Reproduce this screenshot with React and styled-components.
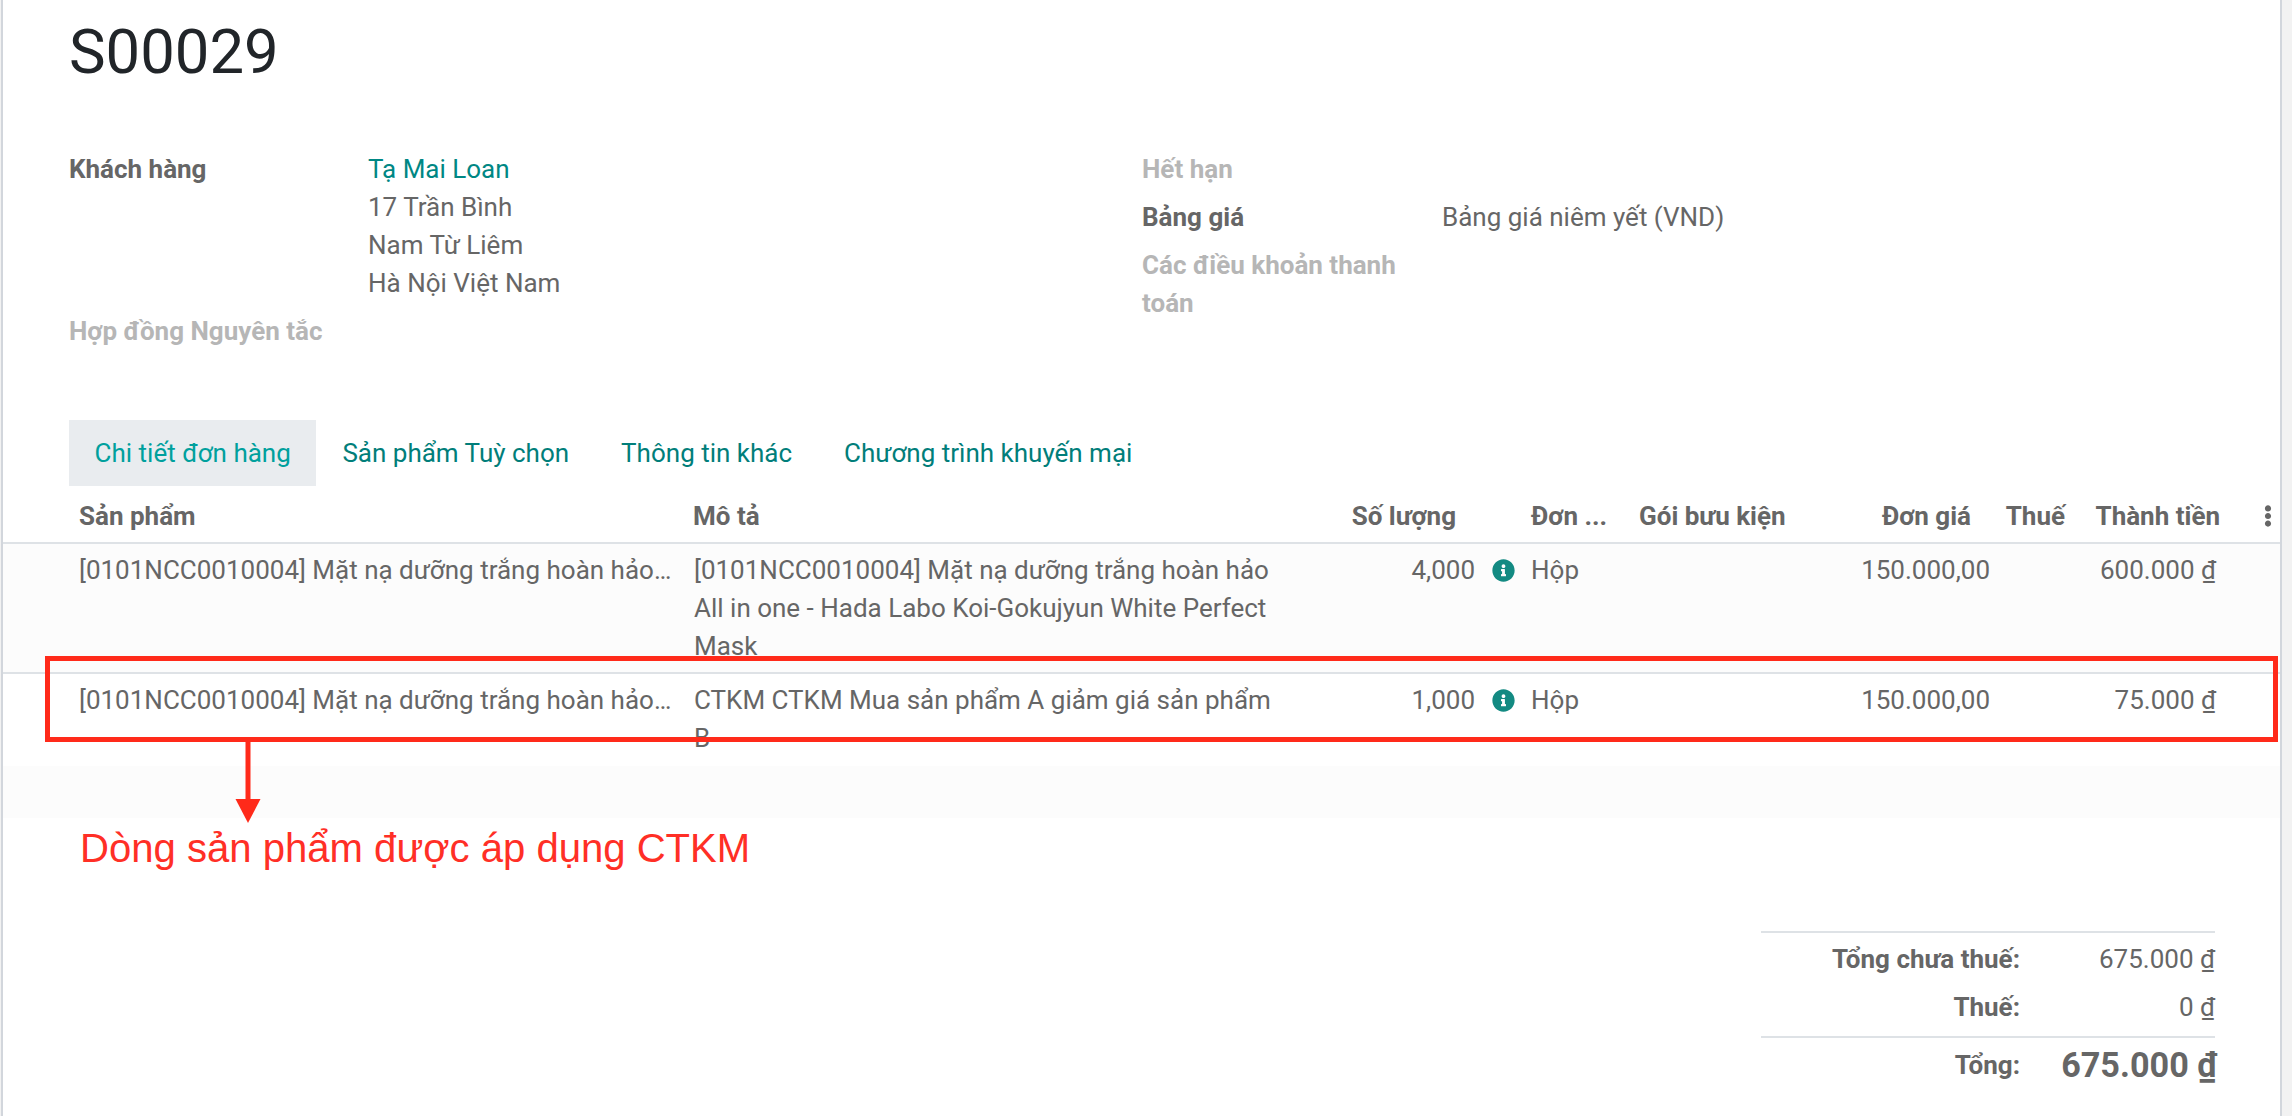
import React from 'react';
import styled, { createGlobalStyle } from 'styled-components';
import { FaInfoCircle, FaEllipsisV } from 'react-icons/fa';

const Global = createGlobalStyle`
  html, body { margin: 0; padding: 0; background: #fff; }
  body { font-family: Roboto, "Noto Sans", sans-serif; font-size: 26px; line-height: 38px; color: #666; overflow: hidden; }
`;

const Page = styled.div`
  position: relative;
  width: 2292px;
  height: 1116px;
  overflow: hidden;
  background: #f2f2f2;
  padding-left: 1px;
  box-sizing: border-box;
`;

const Sheet = styled.main`
  width: 2281px;
  height: 1116px;
  padding-top: 16px;
  box-sizing: border-box;
  background: #fff;
  border-left: 2px solid #d2d6dc;
  border-right: 2px solid #d2d6dc;
`;

const Title = styled.h1`
  margin: 0 0 62px 66px;
  font-size: 61.6px;
  line-height: 72px;
  font-weight: 400;
  color: #212529;
`;

const Groups = styled.div`
  display: grid;
  grid-template-columns: 1073px 1fr;
  margin-left: 66px;
`;

const Group = styled.div`
  display: flex;
  flex-direction: column;
  gap: 10px;
`;

const Field = styled.div`
  display: grid;
  grid-template-columns: ${p => p.$label || 300}px 1fr;
`;

const Label = styled.div`
  font-weight: 700;
  color: ${p => (p.$muted ? '#b6b6b6' : '#666')};
  padding-right: 38px;
`;

const Value = styled.div`
  white-space: pre-line;
`;

const Link = styled.span`
  color: #008784;
`;

const Tabs = styled.nav`
  display: flex;
  margin: 70px 0 0 66px;
  height: 66px;
`;

const Tab = styled.div`
  display: flex;
  align-items: center;
  padding: 0 ${p => (p.$active ? 25.6 : 26)}px 0;
  color: ${p => (p.$active ? '#00a09d' : '#017e7a')};
  background: ${p => (p.$active ? '#e9ecef' : 'transparent')};
`;

const Table = styled.table`
  width: 100%;
  table-layout: fixed;
  border-collapse: collapse;
`;

const Th = styled.th`
  height: 53px;
  padding: 3px ${p => p.$pr || 0}px 0 ${p => p.$pl || 0}px;
  text-align: ${p => p.$align || 'left'};
  font-weight: 700;
  color: #666;
  white-space: nowrap;
  overflow: hidden;
  border-bottom: 2px solid #dee2e6;
`;

const Tr = styled.tr`
  background: ${p => (p.$stripe ? '#fcfcfc' : '#fff')};
  border-bottom: ${p => (p.$line ? '2px solid #dee2e6' : '0')};
`;

const Td = styled.td`
  padding: 7px ${p => p.$pr || 0}px ${p => (p.$line ? 7 : 9)}px ${p => p.$pl || 0}px;
  text-align: ${p => p.$align || 'left'};
  vertical-align: top;
  overflow: hidden;
`;

const Ellipsis = styled.div`
  white-space: nowrap;
  overflow: hidden;
  text-overflow: ellipsis;
`;

const Qty = styled.div`
  display: flex;
  justify-content: flex-end;
  align-items: center;
  gap: 17px;
  color: #666;
`;

const Info = styled(FaInfoCircle)`
  display: block;
  color: #138a82;
  font-size: 23px;
`;

const Dots = styled(FaEllipsisV)`
  display: block;
  margin-left: 26px;
  font-size: 22px;
  color: #666;
`;

const EmptyRow = styled.tr`
  height: 52px;
  background: #fcfcfc;
`;

const Totals = styled.section`
  width: 454px;
  margin: 113px 65px 0 auto;
  border-top: 2px solid #dee2e6;
  padding-top: 7px;
`;

const TotalRow = styled.div`
  display: grid;
  grid-template-columns: 259px 1fr;
  height: ${p => (p.$big ? 54 : 48)}px;
  align-items: ${p => (p.$big ? 'center' : 'start')};
  text-align: right;
  ${p => p.$big && 'border-top: 2px solid #dee2e6;'}
`;

const TotalLabel = styled.div`
  font-weight: 700;
`;

const TotalValue = styled.div`
  font-size: ${p => (p.$big ? 34.2 : 26)}px;
  font-weight: ${p => (p.$big ? 700 : 400)};
  margin-right: ${p => (p.$big ? -2 : 0)}px;
`;

const Box = styled.div`
  position: absolute;
  left: 45px;
  top: 656px;
  width: 2233px;
  height: 86px;
  box-sizing: border-box;
  border: 5px solid #ff2a1a;
  pointer-events: none;
`;

const Arrow = styled.svg`
  position: absolute;
  left: 234px;
  top: 742px;
`;

const Note = styled.div`
  position: absolute;
  left: 80px;
  top: 822px;
  font-family: "Liberation Sans", Arial, sans-serif;
  font-size: 40.1px;
  line-height: 52px;
  color: #ff2f26;
  white-space: nowrap;
`;

const product = '[0101NCC0010004] Mặt nạ dưỡng trắng hoàn hảo All in one - Hada Labo Koi-Gokujyun White Perfect Mask';
const rows = [
  { desc: '[0101NCC0010004] Mặt nạ dưỡng trắng hoàn hảo All in one - Hada Labo Koi-Gokujyun White Perfect Mask', qty: '4,000', total: '600.000 ₫', stripe: true, line: true },
  { desc: 'CTKM CTKM Mua sản phẩm A giảm giá sản phẩm B', qty: '1,000', total: '75.000 ₫' },
];

export default function App() {
  return (
    <Page>
      <Global />
      <Sheet>
        <Title>S00029</Title>
        <Groups>
          <Group>
            <Field $label={299}>
              <Label>Khách hàng</Label>
              <Value>
                <Link>Tạ Mai Loan</Link>
                {'\n17 Trần Bình\nNam Từ Liêm\nHà Nội Việt Nam'}
              </Value>
            </Field>
            <Field $label={299}>
              <Label $muted>Hợp đồng Nguyên tắc</Label>
            </Field>
          </Group>
          <Group>
            <Field><Label $muted>Hết hạn</Label></Field>
            <Field><Label>Bảng giá</Label><Value>Bảng giá niêm yết (VND)</Value></Field>
            <Field><Label $muted>Các điều khoản thanh toán</Label></Field>
          </Group>
        </Groups>
        <Tabs>
          <Tab $active>Chi tiết đơn hàng</Tab>
          <Tab>Sản phẩm Tuỳ chọn</Tab>
          <Tab>Thông tin khác</Tab>
          <Tab>Chương trình khuyến mại</Tab>
        </Tabs>
        <Table>
          <colgroup>
            <col style={{ width: 678 }} />
            <col style={{ width: 620 }} />
            <col style={{ width: 218 }} />
            <col style={{ width: 107 }} />
            <col style={{ width: 175 }} />
            <col style={{ width: 190 }} />
            <col style={{ width: 85 }} />
            <col style={{ width: 155 }} />
            <col />
          </colgroup>
          <thead>
            <tr>
              <Th $pl={76}>Sản phẩm</Th>
              <Th $pl={12}>Mô tả</Th>
              <Th $align="right" $pr={63}>Số lượng</Th>
              <Th $pl={12}>Đơn ...</Th>
              <Th $pl={13}>Gói bưu kiện</Th>
              <Th $align="right" $pr={20}>Đơn giá</Th>
              <Th $align="right" $pr={11}>Thuế</Th>
              <Th $align="right" $pr={11}>Thành tiền</Th>
              <Th><Dots /></Th>
            </tr>
          </thead>
          <tbody>
            {rows.map(r => (
              <Tr key={r.qty} $stripe={r.stripe} $line={r.line}>
                <Td $pl={76} $pr={5} $line={r.line}><Ellipsis>{product}</Ellipsis></Td>
                <Td $pl={13} $pr={20} $line={r.line}>{r.desc}</Td>
                <Td $pr={4} $line={r.line}><Qty>{r.qty}<Info /></Qty></Td>
                <Td $pl={12} $line={r.line}>Hộp</Td>
                <Td $line={r.line} />
                <Td $align="right" $pr={1} $line={r.line}>150.000,00</Td>
                <Td $line={r.line} />
                <Td $align="right" $pr={15} $line={r.line}>{r.total}</Td>
                <Td $line={r.line} />
              </Tr>
            ))}
            <EmptyRow><td colSpan={9} /></EmptyRow>
          </tbody>
        </Table>
        <Totals>
          <TotalRow><TotalLabel>Tổng chưa thuế:</TotalLabel><TotalValue>675.000 ₫</TotalValue></TotalRow>
          <TotalRow><TotalLabel>Thuế:</TotalLabel><TotalValue>0 ₫</TotalValue></TotalRow>
          <TotalRow $big><TotalLabel>Tổng:</TotalLabel><TotalValue $big>675.000 ₫</TotalValue></TotalRow>
        </Totals>
      </Sheet>
      <Box />
      <Arrow width="28" height="82" viewBox="0 0 28 82">
        <rect x="11.5" y="0" width="5" height="58" fill="#ff2a1a" />
        <path d="M1.5 57 H26.5 L14 81 Z" fill="#ff2a1a" />
      </Arrow>
      <Note>Dòng sản phẩm được áp dụng CTKM</Note>
    </Page>
  );
}
